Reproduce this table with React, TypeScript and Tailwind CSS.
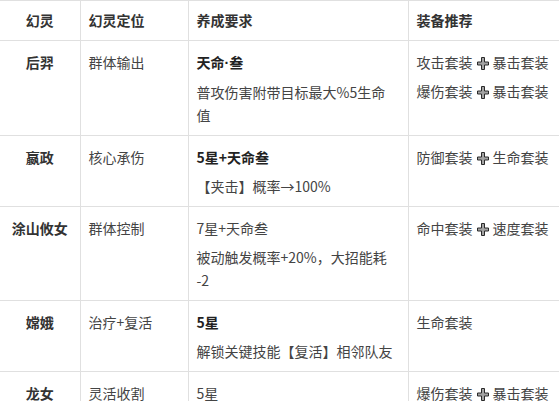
import React from "react";

function Plus() {
  return (
    <svg width="12" height="13" viewBox="0 0 12 13" className="inline-block align-[-2px] mx-[4px]">
      <path
        d="M4.5 0.5 H7.5 V5 H11.5 V8 H7.5 V12.5 H4.5 V8 H0.5 V5 H4.5 Z"
        fill="#a3a3a3"
        stroke="#2a2a2a"
        strokeWidth="1"
      />
    </svg>
  );
}

type Row = {
  name: string;
  role: string;
  req: { text: React.ReactNode; bold?: boolean }[];
  gear: React.ReactNode[];
};

const dot = <span style={{ fontFamily: '"Liberation Sans", sans-serif' }}>·</span>;

const rows: Row[] = [
  {
    name: "后羿",
    role: "群体输出",
    req: [{ text: <>天命{dot}叁</>, bold: true }, { text: "普攻伤害附带目标最大%5生命值" }],
    gear: [
      <>攻击套装<Plus />暴击套装</>,
      <>爆伤套装<Plus />暴击套装</>,
    ],
  },
  {
    name: "嬴政",
    role: "核心承伤",
    req: [{ text: "5星+天命叁", bold: true }, { text: "【夹击】概率→100%" }],
    gear: [<>防御套装<Plus />生命套装</>],
  },
  {
    name: "涂山攸女",
    role: "群体控制",
    req: [{ text: "7星+天命叁" }, { text: <>被动触发概率+20%，大招能耗<wbr />-2</> }],
    gear: [<>命中套装<Plus />速度套装</>],
  },
  {
    name: "嫦娥",
    role: "治疗+复活",
    req: [{ text: "5星", bold: true }, { text: "解锁关键技能【复活】相邻队友" }],
    gear: [<>生命套装</>],
  },
  {
    name: "龙女",
    role: "灵活收割",
    req: [{ text: "5星" }, { text: "" }],
    gear: [<>爆伤套装<Plus />暴击套装</>],
  },
];

export default function App() {
  const font = { fontFamily: '"Noto Sans CJK SC", "Noto Sans", sans-serif' };
  return (
    <div className="w-[559px] h-[401px] overflow-hidden bg-white" style={font}>
      <table className="border-collapse w-[590px] table-fixed text-[14px] leading-[23px] text-[#333]">
        <colgroup>
          <col className="w-[80px]" />
          <col className="w-[108px]" />
          <col className="w-[220px]" />
          <col />
        </colgroup>
        <thead>
          <tr>
            <th className="border border-[#e0e0e0] border-l-0 py-[8px] px-[8px] text-center font-bold">幻灵</th>
            <th className="border border-[#e0e0e0] py-[8px] px-[8px] text-left font-bold">幻灵定位</th>
            <th className="border border-[#e0e0e0] py-[8px] px-[8px] text-left font-bold">养成要求</th>
            <th className="border border-[#e0e0e0] py-[8px] px-[8px] text-left font-bold">装备推荐</th>
          </tr>
        </thead>
        <tbody>
          {rows.map((r) => (
            <tr key={r.name}>
              <td className="border border-[#e0e0e0] border-l-0 align-top pt-[10px] pb-[8px] px-[8px] text-center font-bold">
                {r.name}
              </td>
              <td className="border border-[#e0e0e0] align-top pt-[10px] pb-[8px] px-[8px] text-[#444]">{r.role}</td>
              <td className="border border-[#e0e0e0] align-top pt-[10px] pb-[8px] pl-[8px] pr-[13px]">
                <div className="flex flex-col gap-[6px]">
                  {r.req.map((p, i) => (
                    <p key={i} className={p.bold ? "font-bold text-[#222]" : "text-[#444]"}>
                      {p.text}
                    </p>
                  ))}
                </div>
              </td>
              <td className="border border-[#e0e0e0] align-top pt-[10px] pb-[8px] px-[8px] text-[#444]">
                <div className="flex flex-col gap-[6px]">
                  {r.gear.map((g, i) => (
                    <p key={i} className="whitespace-nowrap">{g}</p>
                  ))}
                </div>
              </td>
            </tr>
          ))}
        </tbody>
      </table>
    </div>
  );
}
